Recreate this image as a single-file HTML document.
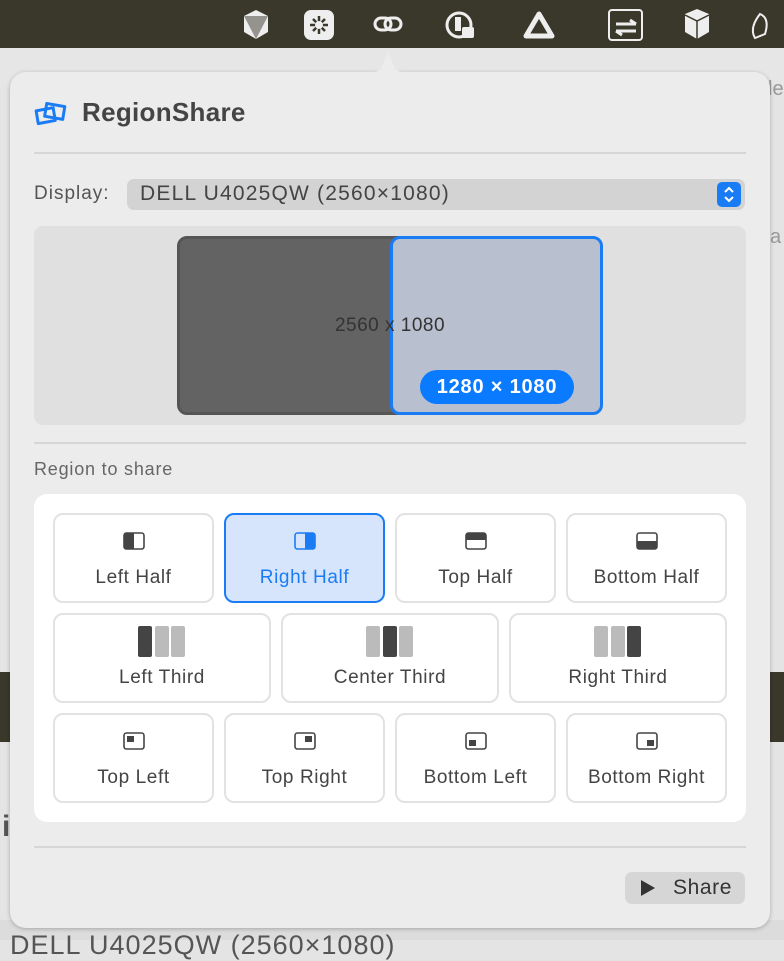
<!DOCTYPE html>
<html><head><meta charset="utf-8"><style>
*{margin:0;padding:0;box-sizing:border-box}
body{width:784px;height:940px;overflow:hidden;background:#e4e4e4;font-family:"Liberation Sans",sans-serif;position:relative}
.abs{position:absolute}
.btn{position:absolute;background:#fff;border:2px solid #e2e2e2;border-radius:10px;display:flex;flex-direction:column;align-items:center;color:#444;font-size:19px;letter-spacing:0.6px}
.btn svg{position:absolute;top:16px}
.btn span{position:absolute;top:52px;width:100%;text-align:center}
.sel{background:#d6e5fc;border-color:#1a7cf5;color:#1a7cf5}
.sep{position:absolute;left:34px;width:712px;height:2px;background:#d6d6d6}
</style></head><body>
<div class="abs" style="left:0;top:0;width:784px;height:48px;background:#3a382b"></div>
<div class="abs" style="left:0;top:48px;width:784px;height:40px;background:#e6e6e6"></div>
<div class="abs" style="left:0;top:672px;width:10px;height:70px;background:#3a382b"></div>
<div class="abs" style="left:770px;top:672px;width:14px;height:70px;background:#3a382b"></div>
<div class="abs" style="left:0;top:920px;width:784px;height:20px;background:#dcdcdc"></div>
<div class="abs" style="left:10px;top:930px;font-size:27px;color:#555;letter-spacing:1px">DELL U4025QW (2560×1080)</div>
<div class="abs" style="left:2px;top:810px;font-size:30px;color:#555;font-weight:bold">i</div>
<div class="abs" style="left:768px;top:78px;font-size:20px;color:#999">le</div>
<div class="abs" style="left:770px;top:226px;font-size:20px;color:#999">a</div>
<svg class="abs" style="left:240px;top:8px" width="540" height="34" viewBox="0 0 540 34">
 <path d="M4 8 L16 2 L28 8 L28 24 L16 31 L4 24Z" fill="#eee"/><path d="M4 8 L28 8 L16 31Z" fill="#3a382b" opacity=".5"/>
 <rect x="64" y="2" width="30" height="30" rx="7" fill="#eee"/><g stroke="#3a382b" stroke-width="2.5"><path d="M79 8v18M70 17h18M73 11l12 12M85 11l-12 12"/></g><circle cx="79" cy="17" r="4" fill="#eee"/>
 <g fill="none" stroke="#eee" stroke-width="3"><rect x="135" y="10" width="16" height="12" rx="6"/><rect x="145" y="10" width="16" height="12" rx="6"/></g>
 <circle cx="219" cy="17" r="12" fill="none" stroke="#eee" stroke-width="3"/><rect x="215" y="9" width="6" height="14" fill="#eee"/><rect x="222" y="19" width="12" height="11" rx="2" fill="#eee"/>
 <path d="M299 6 L312 28 L286 28Z" fill="none" stroke="#eee" stroke-width="5" stroke-linejoin="round"/>
 <rect x="369" y="2" width="33" height="30" rx="3" fill="none" stroke="#eee" stroke-width="2"/><path d="M376 16h20M390 12l6 4M376 23h20M376 23l6 4" stroke="#eee" stroke-width="3"/>
 <path d="M445 6 L457 1 L469 6 L469 24 L457 31 L445 24Z" fill="#eee"/><path d="M445 7 L457 13 L469 7M457 13v18" stroke="#3a382b" stroke-width="1.5" fill="none"/>
 <path d="M520 6 q10 4 5 20 l-10 4 q-6-10 5-24z" fill="none" stroke="#eee" stroke-width="2"/>
</svg>
<div class="abs" style="left:10px;top:72px;width:760px;height:856px;background:#ececec;border-radius:16px;box-shadow:0 1px 4px rgba(0,0,0,.25)"></div>
<svg class="abs" style="left:360px;top:47px" width="56" height="27"><path d="M0 27 Q18 27 22 20 L28 4 L34 20 Q38 27 56 27Z" fill="#ececec"/></svg>
<svg class="abs" style="left:34px;top:99px" width="34" height="28" viewBox="0 0 32 26"><g fill="none" stroke="#1a7cf5" stroke-width="2.8" stroke-linejoin="round"><path d="M12 4 L29 7 L27 19 L10 16Z"/><path d="M2 11 L18 8 L20 20 L4 23Z"/></g></svg>
<div class="abs" style="left:82px;top:97px;font-size:26px;font-weight:bold;color:#444;letter-spacing:0.3px">RegionShare</div>
<div class="sep" style="top:152px"></div>
<div class="abs" style="left:34px;top:183px;font-size:19px;color:#555;letter-spacing:1px">Display:</div>
<div class="abs" style="left:127px;top:179px;width:618px;height:31px;background:#d3d3d3;border-radius:7px"></div>
<div class="abs" style="left:140px;top:182px;font-size:21px;color:#444;letter-spacing:1.2px">DELL U4025QW (2560×1080)</div>
<div class="abs" style="left:717px;top:182px;width:24px;height:25px;background:#1a7cf5;border-radius:5px"></div>
<svg class="abs" style="left:717px;top:182px" width="24" height="25"><path d="M8 10l4-4 4 4M8 15l4 4 4-4" fill="none" stroke="#fff" stroke-width="2"/></svg>
<div class="abs" style="left:34px;top:226px;width:712px;height:199px;background:#e0e0e0;border-radius:9px"></div>
<div class="abs" style="left:177px;top:236px;width:230px;height:179px;background:#636363;border:3px solid #555;border-radius:10px"></div>
<div class="abs" style="left:390px;top:236px;width:213px;height:179px;background:#b8bfcf;border:3px solid #1a7cf5;border-radius:10px"></div>
<div class="abs" style="left:290px;top:315px;width:200px;text-align:center;font-size:19px;color:#333;letter-spacing:0.5px">2560 x 1080</div>
<div class="abs" style="left:420px;top:370px;width:154px;height:34px;background:#0a7aff;border-radius:17px;color:#fff;font-size:20px;font-weight:bold;text-align:center;line-height:34px;letter-spacing:0.8px">1280 × 1080</div>
<div class="sep" style="top:442px"></div>
<div class="abs" style="left:34px;top:459px;font-size:18px;color:#666;letter-spacing:0.8px">Region to share</div>
<div class="abs" style="left:34px;top:494px;width:712px;height:328px;background:#fff;border-radius:13px"></div>
<div class="btn" style="left:53px;top:513px;width:161px;height:90px"><svg width="24" height="20"><rect x="2" y="2" width="20" height="16" rx="2.5" fill="none" stroke="#444" stroke-width="1.6"/><path d="M4 2h8v16H4a2 2 0 0 1-2-2V4a2 2 0 0 1 2-2z" fill="#444"/></svg><span>Left Half</span></div>
<div class="btn sel" style="left:224px;top:513px;width:161px;height:90px"><svg width="24" height="20"><rect x="2" y="2" width="20" height="16" rx="2.5" fill="none" stroke="#1a7cf5" stroke-width="1.6"/><path d="M12 2h8a2 2 0 0 1 2 2v12a2 2 0 0 1-2 2h-8z" fill="#1a7cf5"/></svg><span>Right Half</span></div>
<div class="btn" style="left:395px;top:513px;width:161px;height:90px"><svg width="24" height="20"><rect x="2" y="2" width="20" height="16" rx="2.5" fill="none" stroke="#444" stroke-width="1.6"/><path d="M2 4a2 2 0 0 1 2-2h16a2 2 0 0 1 2 2v5H2z" fill="#444"/></svg><span>Top Half</span></div>
<div class="btn" style="left:566px;top:513px;width:161px;height:90px"><svg width="24" height="20"><rect x="2" y="2" width="20" height="16" rx="2.5" fill="none" stroke="#444" stroke-width="1.6"/><path d="M2 10h20v6a2 2 0 0 1-2 2H4a2 2 0 0 1-2-2z" fill="#444"/></svg><span>Bottom Half</span></div>
<div class="btn" style="left:53px;top:613px;width:218px;height:90px"><svg width="50" height="34" style="top:10px"><rect x="1" y="1" width="14" height="31" rx="2" fill="#444"/><rect x="18" y="1" width="14" height="31" rx="2" fill="#bbb"/><rect x="34" y="1" width="14" height="31" rx="2" fill="#bbb"/></svg><span>Left Third</span></div>
<div class="btn" style="left:281px;top:613px;width:218px;height:90px"><svg width="50" height="34" style="top:10px"><rect x="1" y="1" width="14" height="31" rx="2" fill="#bbb"/><rect x="18" y="1" width="14" height="31" rx="2" fill="#444"/><rect x="34" y="1" width="14" height="31" rx="2" fill="#bbb"/></svg><span>Center Third</span></div>
<div class="btn" style="left:509px;top:613px;width:218px;height:90px"><svg width="50" height="34" style="top:10px"><rect x="1" y="1" width="14" height="31" rx="2" fill="#bbb"/><rect x="18" y="1" width="14" height="31" rx="2" fill="#bbb"/><rect x="34" y="1" width="14" height="31" rx="2" fill="#444"/></svg><span>Right Third</span></div>
<div class="btn" style="left:53px;top:713px;width:161px;height:90px"><svg width="24" height="20"><rect x="2" y="2" width="20" height="16" rx="2.5" fill="none" stroke="#444" stroke-width="1.6"/><rect x="5" y="5" width="7" height="6" fill="#444"/></svg><span>Top Left</span></div>
<div class="btn" style="left:224px;top:713px;width:161px;height:90px"><svg width="24" height="20"><rect x="2" y="2" width="20" height="16" rx="2.5" fill="none" stroke="#444" stroke-width="1.6"/><rect x="12" y="5" width="7" height="6" fill="#444"/></svg><span>Top Right</span></div>
<div class="btn" style="left:395px;top:713px;width:161px;height:90px"><svg width="24" height="20"><rect x="2" y="2" width="20" height="16" rx="2.5" fill="none" stroke="#444" stroke-width="1.6"/><rect x="5" y="9" width="7" height="6" fill="#444"/></svg><span>Bottom Left</span></div>
<div class="btn" style="left:566px;top:713px;width:161px;height:90px"><svg width="24" height="20"><rect x="2" y="2" width="20" height="16" rx="2.5" fill="none" stroke="#444" stroke-width="1.6"/><rect x="12" y="9" width="7" height="6" fill="#444"/></svg><span>Bottom Right</span></div>
<div class="sep" style="top:846px"></div>
<div class="abs" style="left:625px;top:872px;width:120px;height:32px;background:#d6d6d6;border-radius:7px"></div>
<svg class="abs" style="left:638px;top:878px" width="20" height="20"><path d="M3 2 L17 10 L3 18Z" fill="#333"/></svg>
<div class="abs" style="left:673px;top:876px;font-size:21px;color:#333;letter-spacing:0.6px">Share</div>
</body></html>
